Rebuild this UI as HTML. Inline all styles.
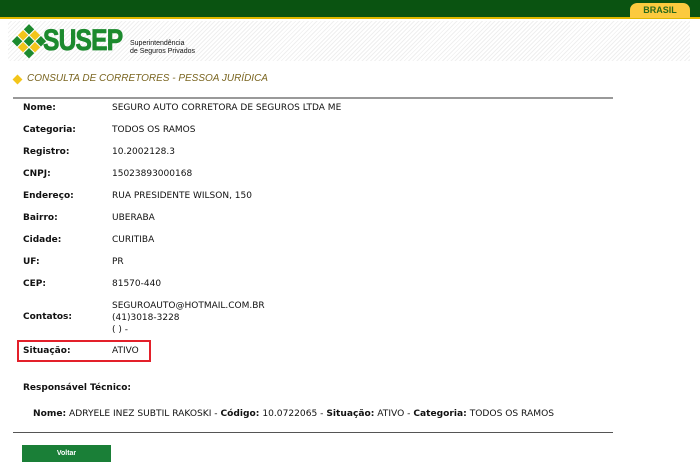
<!DOCTYPE html>
<html><head><meta charset="utf-8"><style>
body{margin:0;width:700px;height:471px;background:#fff;font-family:"DejaVu Sans",Verdana,sans-serif;position:relative;overflow:hidden}
.top{position:absolute;left:0;top:0;width:700px;height:17px;background:#0a5311;border-bottom:2px solid #e0b800}
.br{position:absolute;right:10px;top:3px;width:60px;height:15px;background:#fcca3e;border-radius:7px 7px 0 0;font:bold 9px "Liberation Sans",sans-serif;color:#2b6a1a;text-align:center;line-height:15px}
.band{position:absolute;left:8px;top:21px;width:682px;height:40px;background:repeating-linear-gradient(135deg,#fff 0 2px,#efefef 2px 3px)}
.t{position:absolute;font-size:9px;color:#111;white-space:nowrap}
.l{left:23px;font-weight:bold}
.v{left:112px}
.hr{position:absolute;left:13px;width:600px;height:1px;background:#555}
</style></head><body>
<div class="top"></div><div class="br">BRASIL</div>
<div class="band"></div>
<svg style="position:absolute;left:9px;top:22px" width="40" height="40" viewBox="0 0 36 38">
<g transform="rotate(45 18 19)">
<rect x="6" y="7" width="7" height="7" fill="#1c8a2e"/><rect x="14" y="7" width="7" height="7" fill="#f3c51a"/><rect x="22" y="7" width="7" height="7" fill="#1c8a2e"/>
<rect x="6" y="15" width="7" height="7" fill="#f3c51a"/><rect x="14" y="15" width="7" height="7" fill="#1c8a2e"/><rect x="22" y="15" width="7" height="7" fill="#f3c51a"/>
<rect x="6" y="23" width="7" height="7" fill="#1c8a2e"/><rect x="14" y="23" width="7" height="7" fill="#f3c51a"/><rect x="22" y="23" width="7" height="7" fill="#1c8a2e"/>
</g></svg>
<div class="t" style="left:43px;top:24px;font:900 30px 'Liberation Sans',sans-serif;color:#1c8a2e;letter-spacing:-1px;transform:scaleX(0.82);transform-origin:left;-webkit-text-stroke:0.8px #1c8a2e">SUSEP</div>
<div class="t" style="left:130px;top:40px;font:7px 'Liberation Sans',sans-serif;line-height:8px">Superintendência<br>de Seguros Privados</div>
<div style="position:absolute;left:14px;top:76px;width:7px;height:7px;background:#f3c51a;transform:rotate(45deg)"></div>
<div class="t" style="left:27px;top:73px;font:italic 10px 'Liberation Sans',sans-serif;color:#7a6520">CONSULTA DE CORRETORES - PESSOA JURÍDICA</div>
<div class="hr" style="top:97px;height:2px;background:#999"></div>
<div class="t l" style="top:103px">Nome:</div><div class="t v" style="top:103px">SEGURO AUTO CORRETORA DE SEGUROS LTDA ME</div>
<div class="t l" style="top:125px">Categoria:</div><div class="t v" style="top:125px">TODOS OS RAMOS</div>
<div class="t l" style="top:147px">Registro:</div><div class="t v" style="top:147px">10.2002128.3</div>
<div class="t l" style="top:169px">CNPJ:</div><div class="t v" style="top:169px">15023893000168</div>
<div class="t l" style="top:191px">Endereço:</div><div class="t v" style="top:191px">RUA PRESIDENTE WILSON, 150</div>
<div class="t l" style="top:213px">Bairro:</div><div class="t v" style="top:213px">UBERABA</div>
<div class="t l" style="top:235px">Cidade:</div><div class="t v" style="top:235px">CURITIBA</div>
<div class="t l" style="top:257px">UF:</div><div class="t v" style="top:257px">PR</div>
<div class="t l" style="top:279px">CEP:</div><div class="t v" style="top:279px">81570-440</div>
<div class="t l" style="top:312px">Contatos:</div><div class="t v" style="top:300px;line-height:12px">SEGUROAUTO@HOTMAIL.COM.BR<br>(41)3018-3228<br>( ) -</div>
<div style="position:absolute;left:17px;top:340px;width:130px;height:18px;border:2px solid #e3202a"></div>
<div class="t l" style="top:346px">Situação:</div><div class="t v" style="top:346px">ATIVO</div>
<div class="t l" style="top:383px">Responsável Técnico:</div>
<div class="t" style="left:33px;top:409px;font-size:9.1px"><b>Nome:</b> ADRYELE INEZ SUBTIL RAKOSKI - <b>Código:</b> 10.0722065 - <b>Situação:</b> ATIVO - <b>Categoria:</b> TODOS OS RAMOS</div>
<div class="hr" style="top:432px"></div>
<div style="position:absolute;left:22px;top:445px;width:89px;height:17px;background:#1a7f37;color:#fff;font:bold 7px 'Liberation Sans',sans-serif;text-align:center;line-height:17px">Voltar</div>
</body></html>
